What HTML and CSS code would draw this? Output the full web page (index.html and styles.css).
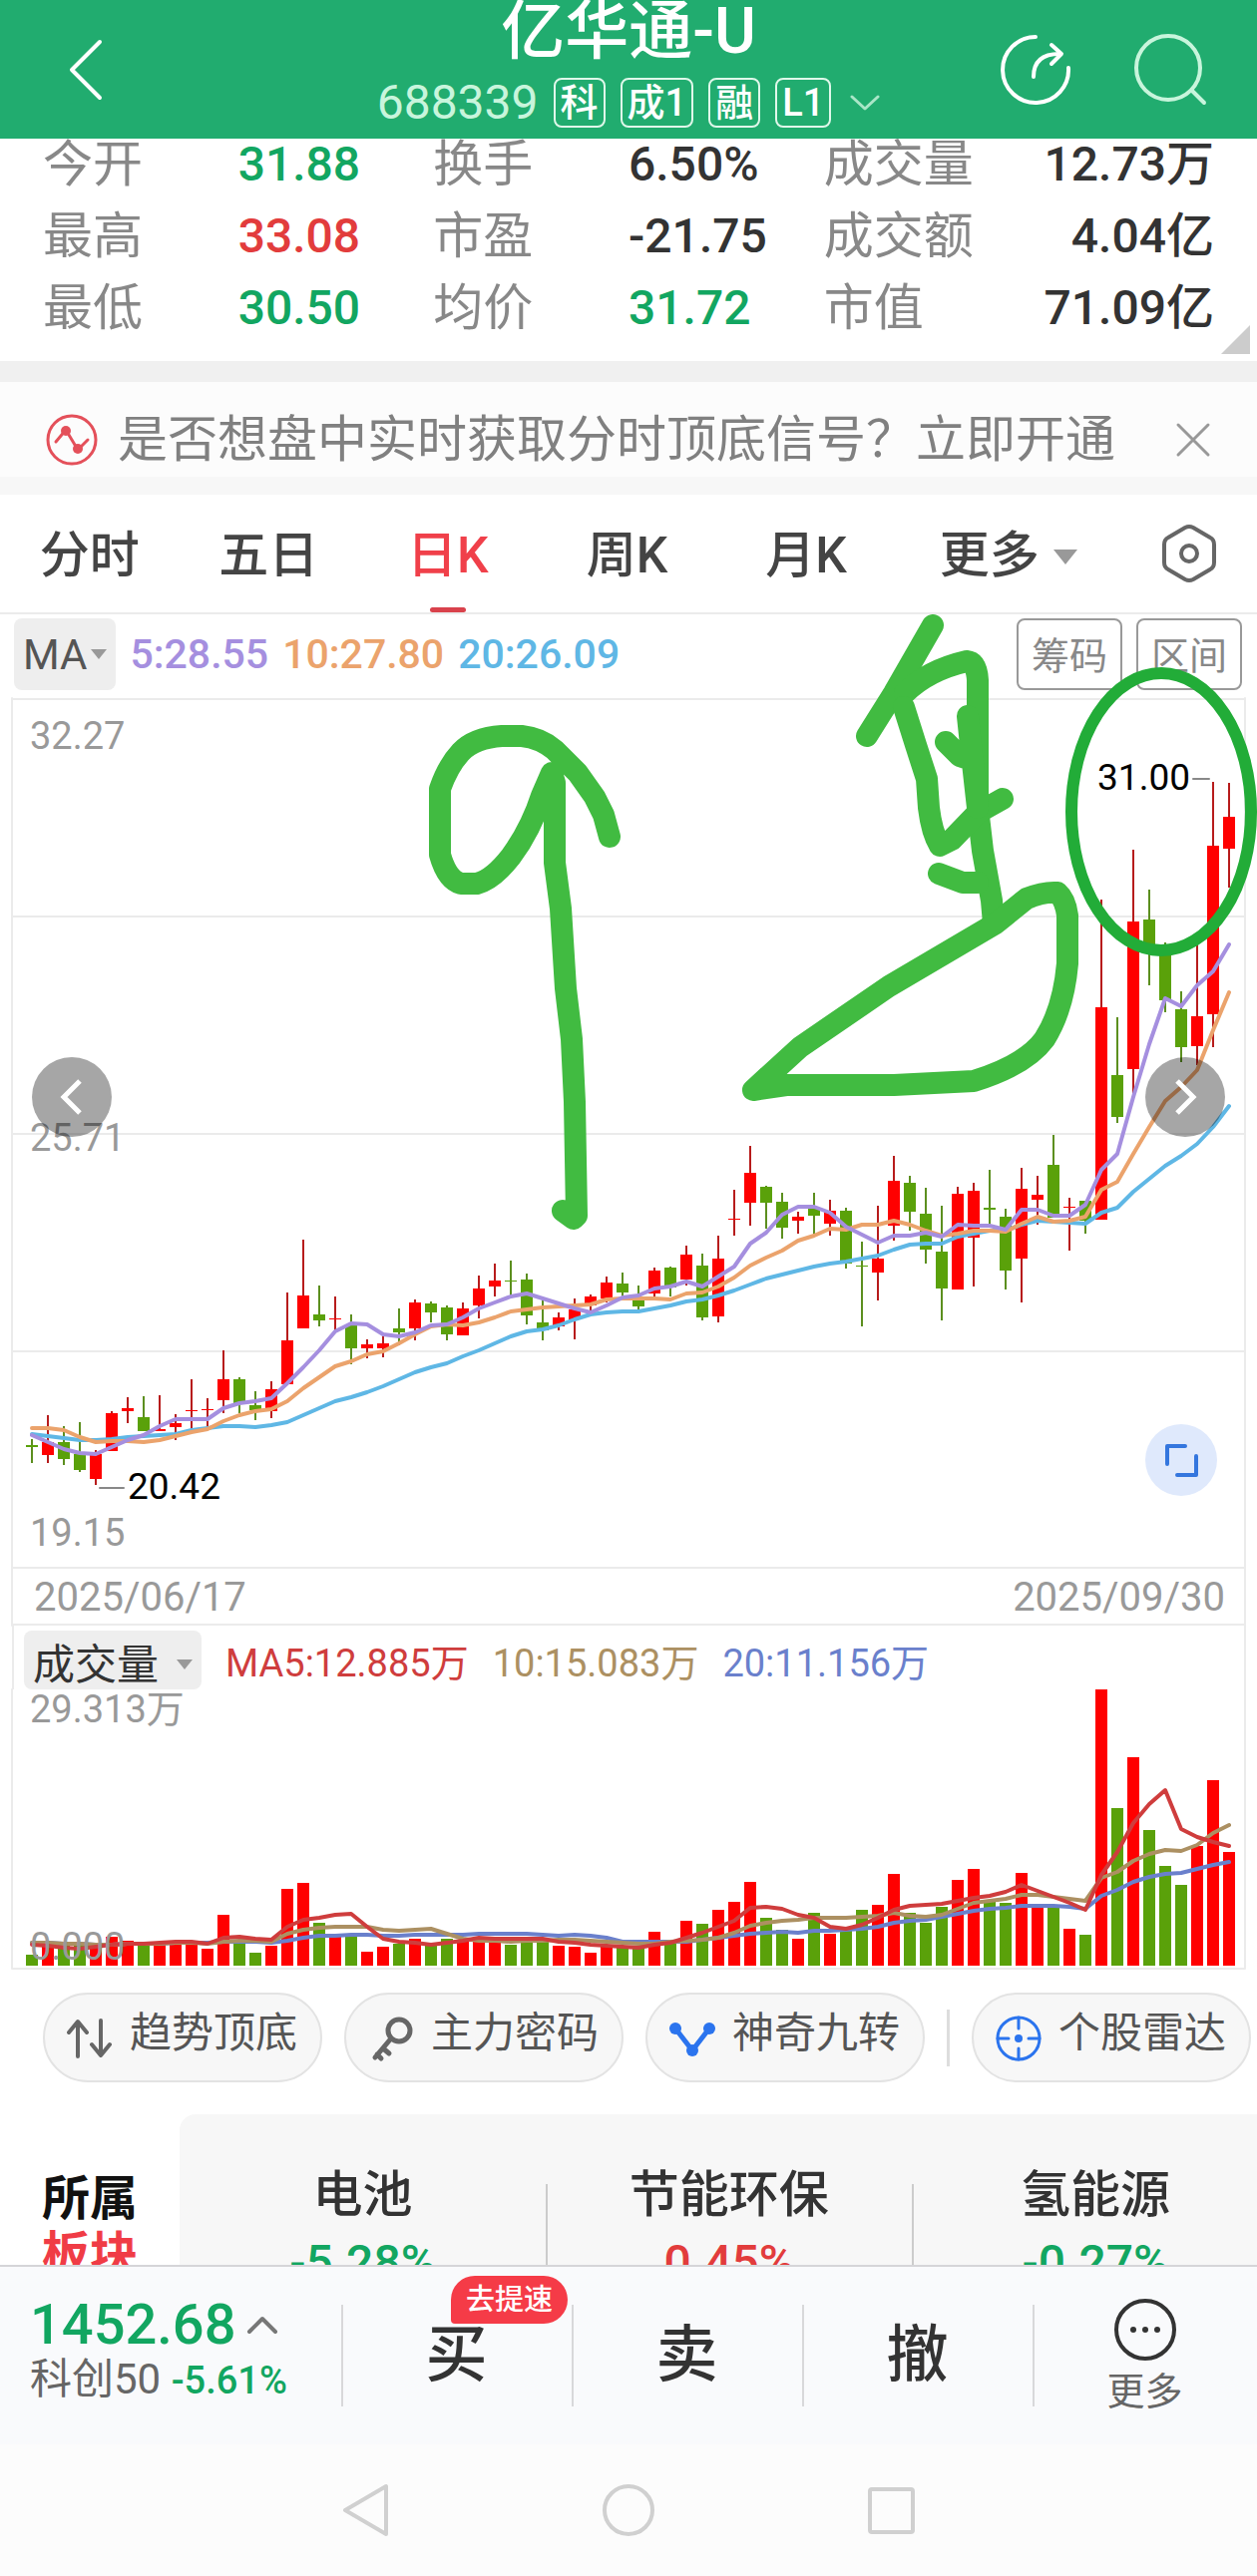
FILE: index.html
```
<!DOCTYPE html>
<html lang="zh-CN">
<head>
    <meta charset="UTF-8">
    <meta name="viewport" content="width=device-width, initial-scale=1.0">
    <title>亿华通-U 688339</title>
    <link rel="stylesheet" href="styles.css">
</head>
<body>
    <header class="header">
        <button type="button" class="iconBtn backBtn" aria-label="返回">
            <svg width="40" height="64" viewBox="0 0 40 64"><path d="M34 4L6 32L34 60"/></svg>
        </button>
        <div class="headerMain">
            <h1 class="stockName">亿华通-U</h1>
            <div class="stockInfo">
                <span class="stockCode">688339</span>
                <span class="badge">科</span>
                <span class="badge">成1</span>
                <span class="badge">融</span>
                <span class="badge">L1</span>
                <svg class="infoArrow" width="30" height="16" viewBox="0 0 30 16"><path d="M2 2L15 14L28 2"/></svg>
            </div>
        </div>
        <div class="headerTools">
            <button type="button" class="iconBtn" aria-label="分享">
                <svg width="76" height="76" viewBox="0 0 76 76"><path d="M38 5A33 33 0 1 0 71 36"/><path d="M36 45C36 30 44 22 62 22"/><path d="M54 13L64 22L54 32"/></svg>
            </button>
            <button type="button" class="iconBtn searchBtn" aria-label="搜索">
                <svg width="76" height="76" viewBox="0 0 76 76"><circle cx="36" cy="36" r="32"/><path d="M60 59L72 71"/></svg>
            </button>
        </div>
    </header>

    <section class="quote">
        <span class="label">今开</span><span class="value down">31.88</span>
        <span class="label">换手</span><span class="value">6.50%</span>
        <span class="label">成交量</span><span class="value right">12.73万</span>
        <span class="label">最高</span><span class="value up">33.08</span>
        <span class="label">市盈</span><span class="value">-21.75</span>
        <span class="label">成交额</span><span class="value right">4.04亿</span>
        <span class="label">最低</span><span class="value down">30.50</span>
        <span class="label">均价</span><span class="value down">31.72</span>
        <span class="label">市值</span><span class="value right">71.09亿</span>
    </section>

    <section class="notice">
        <svg width="52" height="52" viewBox="0 0 52 52"><circle class="noticeRing" cx="26" cy="26" r="24"/><path class="noticeRing" d="M10 28L20 16L32 36L42 26"/><circle class="noticeDot" cx="20" cy="17" r="5"/><circle class="noticeDot" cx="32" cy="35" r="5"/></svg>
        <a href="#" class="noticeText">是否想盘中实时获取分时顶底信号？立即开通</a>
        <button type="button" class="iconBtn closeBtn" aria-label="关闭">
            <svg width="36" height="36" viewBox="0 0 36 36"><path d="M3 3L33 33M33 3L3 33"/></svg>
        </button>
    </section>

    <nav class="tabs">
        <button type="button" class="tab">分时</button>
        <button type="button" class="tab">五日</button>
        <button type="button" class="tab active">日K</button>
        <button type="button" class="tab">周K</button>
        <button type="button" class="tab">月K</button>
        <button type="button" class="tab tabMore">更多<i class="triangle"></i></button>
        <button type="button" class="tab tabSet" aria-label="设置">
            <svg width="56" height="60" viewBox="0 0 56 60"><path d="M24 4Q28 2 32 4L49 14Q53 16 53 21V39Q53 44 49 46L32 56Q28 58 24 56L7 46Q3 44 3 39V21Q3 16 7 14Z"/><circle cx="28" cy="30" r="8"/></svg>
        </button>
    </nav>

    <section class="kline">
        <div class="maRow">
            <button type="button" class="pick">MA<i class="triangle small"></i></button>
            <span class="ma5">5:28.55</span>
            <span class="ma10">10:27.80</span>
            <span class="ma20">20:26.09</span>
            <button type="button" class="outline first">筹码</button>
            <button type="button" class="outline">区间</button>
        </div>
        <div class="chartBox">
            <svg class="chart" id="klineChart" viewBox="0 700 1260 930">
                <path class="grid" d="M12 701H1248M12 919H1248M12 1137H1248M12 1355H1248M12 1572H1248M12 1629H1248M12 700V1630M1248 700V1630"/>
                <g class="axis">
                    <text x="30" y="751">32.27</text>
                    <text x="30" y="1154">25.71</text>
                    <text x="30" y="1550">19.15</text>
                    <text class="date" x="34" y="1615">2025/06/17</text>
                    <text class="date" x="1228" y="1615" text-anchor="end">2025/09/30</text>
                </g>
                <g id="candles"></g>
                <g id="klineLines"></g>
                <path class="tick" d="M100 1492H124M1196 781H1212"/>
                <g class="mark">
                    <text x="128" y="1503">20.42</text>
                    <text x="1193" y="792" text-anchor="end">31.00</text>
                </g>
            </svg>
            <button type="button" class="round prev" aria-label="向左">
                <svg width="80" height="80" viewBox="0 0 80 80"><path d="M48 24L32 40L48 56"/></svg>
            </button>
            <button type="button" class="round next" aria-label="向右">
                <svg width="80" height="80" viewBox="0 0 80 80"><path d="M32 24L48 40L32 56"/></svg>
            </button>
            <button type="button" class="full" aria-label="全屏">
                <svg width="72" height="72" viewBox="0 0 72 72"><path d="M22 40V22H40M51 32V51H32"/></svg>
            </button>
        </div>
        <!-- 手绘标注 -->
        <svg class="drawing" viewBox="0 616 1260 956">
            <g class="brush">
                <path d="M611 839L605 817L596 799L579 775L556 752Q542 740 523 738H503Q475 740 462 754Q449 768 441 791V857Q448 882 462 886H478Q494 882 512 859Q532 832 543 798L553 775L556 785V865L562 911L567 991L573 1042L576 1105L578 1219L575 1222L564 1214"/>
                <path d="M935 627L896 695L869 738"/>
                <path d="M907 695Q930 672 969 663Q979 664 980 682V810L985 853L994 903L996 926"/>
                <path d="M906 709L918 747L929 781L931 810Q934 835 942 848L954 842L980 815L1005 801"/>
                <path d="M970 718L974 756L980 810M948 744L962 758L974 762M941 876L965 885H980"/>
                <path d="M755 1093L802 1050L891 989L998 926L1029 901Q1046 894 1060 895Q1068 902 1070 918V966Q1066 1012 1047 1042Q1028 1068 976 1084L896 1088H788Z"/>
            </g>
            <ellipse class="ring" cx="1164" cy="814" rx="90" ry="139"/>
        </svg>
    </section>

    <section class="volume">
        <div class="volRow">
            <button type="button" class="pick volPick">成交量<i class="triangle small"></i></button>
            <span class="vol5">MA5:12.885万</span>
            <span class="vol10">10:15.083万</span>
            <span class="vol20">20:11.156万</span>
        </div>
        <svg class="chart" viewBox="0 1694 1260 282">
            <path class="grid" d="M12 1694V1974H1248V1630"/>
            <g id="volBars"></g>
            <g id="volLines"></g>
            <g class="axis">
                <text x="30" y="1727">29.313万</text>
                <text x="30" y="1965">0.000</text>
            </g>
        </svg>
    </section>

    <section class="tools">
        <button type="button" class="tool">
            <svg width="48" height="48" viewBox="0 0 48 48"><path d="M12 42V8M3 18L12 7L21 18M35 6V40M26 30L35 41L44 30"/></svg>趋势顶底
        </button>
        <button type="button" class="tool">
            <svg width="48" height="48" viewBox="0 0 48 48"><path class="thick" d="M24 24L8 43M16 34L22 39M10 40L14 44"/><circle class="thick" cx="32" cy="16" r="11"/></svg>主力密码
        </button>
        <button type="button" class="tool blue">
            <svg width="48" height="48" viewBox="0 0 48 48"><path class="thick" d="M7 14L24 36L41 14"/><circle class="fill" cx="7" cy="14" r="6"/><circle class="fill" cx="24" cy="36" r="6"/><circle class="fill" cx="41" cy="14" r="6"/></svg>神奇九转
        </button>
        <i class="split"></i>
        <button type="button" class="tool blue">
            <svg width="48" height="48" viewBox="0 0 48 48"><circle cx="24" cy="24" r="21"/><circle class="fill" cx="24" cy="24" r="4"/><path d="M24 3V14M24 34V45M3 24H14M34 24H45"/></svg>个股雷达
        </button>
    </section>

    <section class="plates">
        <h2 class="plateTitle">所属<em>板块</em></h2>
        <div class="plateList">
            <a href="#" class="plate">电池<b class="down">-5.28%</b></a>
            <a href="#" class="plate">节能环保<b class="up">0.45%</b></a>
            <a href="#" class="plate">氢能源<b class="down">-0.27%</b></a>
        </div>
    </section>

    <footer class="trade">
        <div class="index">
            <div class="indexPrice">1452.68<svg width="32" height="20" viewBox="0 0 32 20"><path d="M3 17L16 4L29 17"/></svg></div>
            <div class="indexName">科创50 <b>-5.61%</b></div>
        </div>
        <button type="button" class="tradeBtn">买<span class="tag">去提速</span></button>
        <button type="button" class="tradeBtn">卖</button>
        <button type="button" class="tradeBtn">撤</button>
        <button type="button" class="tradeBtn moreBtn">
            <svg width="64" height="64" viewBox="0 0 64 64"><circle cx="32" cy="32" r="29"/><circle class="dot" cx="20" cy="32" r="3"/><circle class="dot" cx="32" cy="32" r="3"/><circle class="dot" cx="44" cy="32" r="3"/></svg>
            更多
        </button>
    </footer>

    <nav class="sysNav">
        <button type="button" class="iconBtn" aria-label="后退"><svg width="56" height="56" viewBox="0 0 56 56"><path d="M48 4V52L7 28Z"/></svg></button>
        <button type="button" class="iconBtn" aria-label="主页"><svg width="56" height="56" viewBox="0 0 56 56"><circle cx="28" cy="28" r="24"/></svg></button>
        <button type="button" class="iconBtn" aria-label="任务"><svg width="56" height="56" viewBox="0 0 56 56"><rect x="7" y="7" width="43" height="43" rx="2"/></svg></button>
    </nav>

    <script src="chart.js"></script>
</body>
</html>
```
FILE: styles.css
```
*{
    margin: 0;
    padding: 0;
    box-sizing: border-box;
}
body{
    background-color: #fff;
    color: #333;
    font-family: Roboto, "Noto Sans CJK SC", sans-serif;
    overflow-x: hidden;
}
button{
    border: none;
    background: none;
    font-family: inherit;
    color: inherit;
}
a{
    color: inherit;
    text-decoration: none;
}
svg{
    display: block;
    fill: none;
    stroke-linecap: round;
    stroke-linejoin: round;
}
.up{
    color: #e23c3c;
}
.down{
    color: #12a661;
}
.triangle{
    display: inline-block;
    border: 12px solid transparent;
    border-top: 15px solid #999;
    border-bottom: 0;
}
.triangle.small{
    border-width: 10px 8px 0;
}

/* 顶部 */
.header{
    display: grid;
    grid-template-columns: 1fr auto 1fr;
    height: 139px;
    background-color: #21ac6f;
    color: #fff;
}
.header svg{
    stroke: #fff;
    stroke-width: 4;
}
.backBtn{
    justify-self: start;
    align-self: center;
    padding-left: 66px;
}
.stockName{
    padding-top: 2px;
    font-size: 64px;
    font-weight: 500;
    line-height: 60px;
    text-align: center;
}
.stockInfo{
    display: flex;
    align-items: center;
    gap: 15px;
    margin-top: 16px;
}
.stockCode{
    font-size: 48px;
    line-height: 50px;
    color: #c8f5dc;
}
.badge{
    padding: 0 5px;
    border: 2px solid #dff8ea;
    border-radius: 8px;
    font-size: 38px;
    font-weight: 500;
    line-height: 46px;
}
.header .infoArrow{
    margin-left: 4px;
    stroke: #a9e6c7;
    stroke-width: 3;
}
.headerTools{
    display: flex;
    justify-content: flex-end;
    align-items: center;
    gap: 59px;
    padding-right: 49px;
}
.header .searchBtn svg{
    stroke: #c8f5dc;
}

/* 行情 */
.quote{
    position: relative;
    display: grid;
    grid-template-columns: repeat(6, 1fr);
    margin-top: -10px;
    padding: 0 43px 17px;
    line-height: 72px;
    white-space: nowrap;
}
.quote::after{
    content: "";
    position: absolute;
    right: 7px;
    bottom: 7px;
    border-left: 29px solid transparent;
    border-bottom: 29px solid #ccc;
}
.label{
    font-size: 50px;
    color: #888;
}
.value{
    font-size: 48px;
    font-weight: 500;
}
.value.right{
    text-align: right;
}

/* 提示条 */
.notice{
    display: flex;
    align-items: center;
    height: 134px;
    padding: 20px 46px 0;
    border-top: 21px solid #f0f0f0;
    border-bottom: 18px solid #f7f7f7;
    background-color: #fcfcfc;
}
.noticeRing{
    stroke: #e4505a;
    stroke-width: 3;
}
.noticeDot{
    fill: #e4505a;
}
.noticeText{
    flex: 1;
    margin-left: 20px;
    font-size: 50px;
    line-height: 60px;
    color: #808080;
    white-space: nowrap;
}
.closeBtn svg{
    stroke: #999;
    stroke-width: 3;
}

/* 周期 */
.tabs{
    display: flex;
    height: 120px;
    border-bottom: 2px solid #ebebeb;
}
.tab{
    position: relative;
    flex: 179 0 0;
    padding-bottom: 6px;
    font-size: 50px;
    font-weight: 500;
    color: #444;
}
.tab.active{
    color: #f0404a;
}
.tab.active::after{
    content: "";
    position: absolute;
    left: 50%;
    bottom: 0;
    width: 36px;
    height: 5px;
    margin-left: -18px;
    border-radius: 3px;
    background-color: #d9424c;
}
.tabMore{
    flex-grow: 225;
}
.tabMore .triangle{
    margin-left: 14px;
    vertical-align: 8px;
}
.tabSet{
    flex-grow: 136;
    padding-bottom: 0;
}
.tabSet svg{
    margin: 0 auto;
    stroke: #666;
    stroke-width: 4;
}

/* K线 */
.kline{
    position: relative;
}
.maRow{
    display: flex;
    align-items: center;
    gap: 14px;
    height: 84px;
    padding: 0 15px 4px 14px;
    font-size: 41px;
}
.pick{
    height: 72px;
    padding: 0 9px;
    border-radius: 8px;
    background-color: #eee;
    font-size: 42px;
    color: #555;
    white-space: nowrap;
}
.pick .triangle{
    margin-left: 4px;
    vertical-align: 10px;
}
.ma5{
    color: #a58fdf;
}
.ma10{
    color: #eba36c;
}
.ma20{
    color: #5fb7e5;
}
.ma5, .ma10, .ma20{
    font-weight: 500;
}
.outline{
    height: 72px;
    padding: 0 13px 3px;
    border: 2px solid #999;
    border-radius: 8px;
    font-size: 38px;
    color: #888;
}
.outline.first{
    margin-left: auto;
}
.chartBox{
    position: relative;
}
.chart{
    width: 100%;
    overflow: visible;
}
.grid{
    stroke: #ebebeb;
    stroke-width: 2;
}
.axis{
    fill: #999;
    font-size: 38px;
}
.axis .date{
    font-size: 40px;
}
.mark{
    fill: #000;
    font-size: 37px;
}
.tick{
    stroke: #888;
    stroke-width: 2;
}
.red{
    fill: #f00;
    stroke: #b71c1c;
}
.green{
    fill: #5aa10a;
    stroke: #5c8f1f;
}
.body{
    stroke: none;
}
.line{
    stroke-width: 4;
}
.round{
    position: absolute;
    top: 360px;
    border-radius: 50%;
    background-color: rgba(0, 0, 0, 0.35);
}
.round svg{
    stroke: #fff;
    stroke-width: 5;
    stroke-linecap: butt;
    stroke-linejoin: miter;
}
.prev{
    left: 32px;
}
.next{
    right: 32px;
}
.full{
    position: absolute;
    right: 40px;
    top: 728px;
    border-radius: 50%;
    background-color: #dfe9fc;
}
.full svg{
    stroke: #3476de;
    stroke-width: 4;
}
.drawing{
    position: absolute;
    left: 0;
    top: 0;
    width: 100%;
    pointer-events: none;
}
.brush{
    stroke: #41bb41;
    stroke-width: 22;
}
.ring{
    stroke: #22ac38;
    stroke-width: 12;
}

/* 成交量 */
.volRow{
    display: flex;
    align-items: center;
    gap: 24px;
    height: 64px;
    margin: 0 12px;
    padding: 5px 12px 0 10px;
    border-left: 2px solid #ebebeb;
    font-size: 38px;
}
.volPick{
    height: 59px;
    padding-bottom: 3px;
    color: #333;
}
.volPick .triangle{
    margin-left: 18px;
}
.vol5{
    color: #cf3d3d;
}
.vol10{
    color: #ac9062;
}
.vol20{
    color: #6a80cc;
}

/* 工具 */
.tools{
    display: flex;
    align-items: center;
    gap: 22px;
    padding: 22px 0 32px 43px;
}
.tool{
    display: flex;
    flex: none;
    align-items: center;
    gap: 16px;
    width: 280px;
    height: 90px;
    padding: 0 0 8px 21px;
    border: 2px solid #e3e3e3;
    border-radius: 45px;
    background-color: #f7f7f7;
    font-size: 42px;
    line-height: 50px;
    color: #555;
    white-space: nowrap;
}
.tool svg{
    flex: none;
    margin-top: 10px;
    stroke: #666;
    stroke-width: 4;
}
.tool.blue svg{
    stroke: #2b74ee;
    stroke-width: 3;
}
.tool .fill{
    fill: #2b74ee;
    stroke: none;
}
.tool .thick{
    stroke-width: 5;
}
.split{
    width: 3px;
    height: 57px;
    background-color: #ddd;
}

/* 板块 */
.plates{
    display: flex;
    height: 151px;
    overflow: hidden;
}
.plateTitle{
    flex: none;
    width: 180px;
    padding-top: 57px;
    font-size: 48px;
    line-height: 56px;
    text-align: center;
    color: #111;
}
.plateTitle em{
    display: block;
    font-style: normal;
    color: #f03c46;
}
.plateList{
    display: flex;
    flex: 1;
    overflow: hidden;
    border-radius: 16px 0 0 0;
    background-color: #f7f7f7;
}
.plate{
    position: relative;
    flex: none;
    width: 34%;
    padding-top: 45px;
    font-size: 50px;
    font-weight: 500;
    line-height: 72px;
    text-align: center;
}
.plate + .plate::before{
    content: "";
    position: absolute;
    left: 0;
    top: 70px;
    bottom: 0;
    border-left: 2px solid #ccc;
}
.plate b{
    display: block;
    font-size: 48px;
    font-weight: 500;
    line-height: 64px;
}

/* 底部交易栏 */
.trade{
    display: grid;
    grid-template-columns: 342fr 231fr 231fr 231fr 225fr;
    height: 180px;
    border-top: 2px solid #d5d5d8;
    background-color: #f9fafc;
}
.index{
    padding: 25px 0 0 30px;
    white-space: nowrap;
}
.indexPrice{
    display: flex;
    align-items: center;
    gap: 10px;
    font-size: 56px;
    font-weight: 500;
    line-height: 66px;
    color: #12a661;
}
.indexPrice svg{
    stroke: #777;
    stroke-width: 4;
}
.indexName{
    font-size: 42px;
    line-height: 44px;
    color: #666;
}
.indexName b{
    font-size: 38px;
    font-weight: 500;
    color: #12a661;
}
.tradeBtn{
    position: relative;
    font-size: 62px;
    font-weight: 500;
    line-height: 80px;
}
.tradeBtn::before{
    content: "";
    position: absolute;
    left: 0;
    top: 38px;
    height: 102px;
    border-left: 2px solid #d8d8da;
}
.tag{
    position: absolute;
    left: 110px;
    top: 9px;
    padding: 0 15px;
    border-radius: 24px 24px 24px 4px;
    background-color: #f53b47;
    font-size: 29px;
    line-height: 48px;
    color: #fff;
    white-space: nowrap;
}
.moreBtn{
    padding-top: 8px;
    font-size: 38px;
    font-weight: 400;
    line-height: 60px;
    color: #666;
}
.moreBtn svg{
    margin: 0 auto;
    stroke: #333;
    stroke-width: 4;
}
.moreBtn .dot{
    fill: #333;
    stroke: none;
}
.sysNav{
    display: grid;
    grid-template-columns: repeat(3, 263px);
    justify-content: center;
    height: 132px;
    background-color: #fcfcfc;
}
.sysNav svg{
    margin: 0 auto;
    stroke: #d0d0d0;
    stroke-width: 4;
}
```
FILE: chart.js
```
// 每根K线: 颜色, 最高, 实体上沿, 实体下沿, 最低, 成交量柱高
var days = [
    ["g",1443,1449,1451,1467,11], ["r",1419,1446,1459,1467,22], ["g",1430,1446,1463,1469,22], ["g",1426,1458,1474,1476,20],
    ["r",1454,1458,1483,1489,18], ["r",1415,1417,1455,1455,29], ["r",1401,1412,1415,1427,25], ["g",1400,1421,1435,1435,22],
    ["r",1399,1433,1435,1435,22], ["r",1418,1427,1431,1444,22], ["r",1383,1414,1415,1433,22], ["r",1402,1413,1414,1432,17],
    ["r",1354,1383,1404,1417,51], ["g",1381,1383,1408,1417,25], ["g",1395,1409,1414,1424,13], ["r",1385,1393,1415,1422,20],
    ["r",1296,1344,1388,1388,77], ["r",1243,1299,1332,1332,83], ["g",1289,1318,1324,1330,43], ["r",1300,1322,1323,1335,29],
    ["g",1318,1328,1352,1368,29], ["r",1343,1348,1352,1362,14], ["r",1339,1347,1352,1361,19], ["g",1312,1332,1336,1349,22],
    ["r",1303,1306,1332,1344,27], ["g",1305,1307,1316,1326,21], ["g",1309,1311,1338,1344,27], ["r",1306,1312,1339,1339,26],
    ["r",1279,1292,1309,1322,29], ["r",1267,1284,1290,1300,28], ["g",1264,1284,1285,1299,21], ["g",1277,1283,1319,1328,25],
    ["g",1304,1326,1334,1344,24], ["r",1316,1321,1330,1334,20], ["r",1302,1313,1323,1343,19], ["r",1298,1300,1309,1315,13],
    ["r",1280,1286,1302,1306,19], ["g",1276,1287,1296,1300,18], ["g",1289,1301,1310,1314,18], ["r",1271,1274,1297,1304,34],
    ["g",1270,1271,1291,1300,22], ["r",1249,1258,1283,1289,45], ["g",1257,1269,1321,1324,42], ["r",1239,1262,1320,1326,56],
    ["r",1193,1222,1223,1239,64], ["r",1149,1176,1206,1229,84], ["g",1189,1190,1206,1232,48], ["g",1196,1205,1231,1242,36],
    ["r",1215,1220,1224,1237,27], ["g",1196,1212,1219,1238,53], ["r",1203,1214,1227,1239,32], ["g",1211,1214,1267,1272,37],
    ["g",1245,1269,1270,1330,56], ["r",1209,1262,1276,1304,61], ["r",1159,1184,1229,1244,92], ["g",1179,1186,1215,1234,53],
    ["g",1191,1217,1253,1267,43], ["g",1209,1255,1292,1324,59], ["r",1190,1197,1293,1293,86], ["r",1186,1194,1241,1290,97],
    ["g",1173,1211,1213,1228,65], ["g",1212,1220,1274,1293,63], ["r",1171,1192,1262,1306,93], ["r",1179,1198,1203,1228,59],
    ["g",1138,1168,1221,1221,60], ["r",1201,1210,1211,1254,37], ["g",1204,1204,1224,1237,31], ["r",902,1010,1223,1223,277],
    ["g",1020,1078,1120,1126,158], ["r",852,924,1072,1103,209], ["g",892,922,948,988,136], ["g",945,950,1003,1015,100],
    ["g",994,1012,1050,1065,81], ["r",944,1019,1049,1068,120], ["r",784,848,1017,1050,186], ["r",785,819,851,890,114]
];

var klineLines = [
    ["#5fb7e5", [1438,1440,1442,1444,1444,1443,1441,1440,1439,1438,1434,1432,1430,1430,1431,1429,1426,1419,1412,1405,1401,1396,1390,1383,1376,1371,1367,1360,1354,1347,1340,1335,1333,1329,1323,1318,1316,1315,1315,1312,1309,1305,1303,1299,1294,1288,1282,1278,1274,1270,1267,1265,1262,1259,1253,1248,1247,1247,1240,1237,1234,1234,1228,1224,1225,1226,1227,1216,1211,1195,1182,1169,1159,1147,1130,1109]],
    ["#eba36c", [1432,1432,1434,1441,1446,1445,1445,1446,1444,1440,1436,1433,1425,1419,1415,1413,1405,1392,1381,1370,1365,1358,1355,1347,1338,1330,1328,1329,1326,1321,1315,1313,1311,1310,1309,1308,1303,1302,1302,1302,1303,1297,1296,1290,1281,1269,1261,1254,1244,1239,1232,1233,1228,1228,1224,1228,1234,1239,1237,1234,1234,1235,1227,1220,1225,1224,1220,1193,1185,1157,1130,1104,1090,1073,1033,995]],
    ["#a58fdf", [1439,1446,1453,1457,1458,1451,1444,1439,1430,1423,1423,1423,1412,1407,1405,1402,1387,1371,1354,1335,1327,1328,1338,1340,1336,1329,1328,1321,1312,1306,1300,1297,1302,1307,1312,1316,1309,1301,1299,1292,1290,1285,1290,1280,1270,1247,1236,1218,1210,1210,1216,1230,1238,1246,1239,1239,1236,1240,1228,1229,1229,1233,1213,1213,1219,1219,1208,1173,1157,1100,1047,1001,1009,988,974,947]]
];

var volLines = [
    ["#6a80cc", [1948,1948,1949,1949,1950,1950,1949,1949,1949,1948,1948,1948,1947,1947,1947,1948,1946,1943,1941,1941,1940,1940,1941,1941,1940,1940,1940,1940,1939,1939,1939,1939,1940,1941,1940,1941,1943,1947,1947,1947,1947,1947,1945,1943,1941,1939,1938,1937,1938,1936,1936,1935,1934,1932,1928,1926,1925,1922,1919,1916,1914,1913,1911,1911,1911,1912,1914,1901,1895,1887,1882,1879,1878,1874,1870,1867]],
    ["#ac9062", [1948,1948,1949,1949,1950,1950,1949,1949,1949,1948,1948,1949,1947,1946,1946,1947,1939,1935,1933,1932,1932,1932,1935,1936,1935,1934,1939,1944,1946,1946,1947,1946,1946,1945,1945,1946,1947,1948,1949,1949,1947,1946,1945,1943,1938,1931,1928,1926,1925,1923,1923,1923,1922,1921,1918,1921,1922,1920,1914,1908,1906,1904,1900,1900,1902,1904,1906,1883,1877,1866,1859,1855,1856,1850,1838,1830]],
    ["#cf3d3d", [1950,1951,1953,1954,1952,1950,1949,1949,1948,1947,1947,1949,1943,1942,1944,1945,1932,1925,1923,1920,1919,1932,1944,1947,1948,1950,1948,1946,1943,1944,1944,1944,1944,1947,1948,1950,1951,1952,1953,1950,1948,1943,1938,1932,1926,1913,1912,1914,1920,1923,1932,1934,1930,1923,1915,1911,1910,1909,1906,1903,1901,1897,1890,1896,1902,1908,1915,1880,1857,1828,1809,1795,1834,1842,1847,1851]]
];

var first = 32, step = 16, base = 1971;

function add(parentId, name, attrs){
    var node = document.createElementNS("http://www.w3.org/2000/svg", name);
    for(var key in attrs){
        node.setAttribute(key, attrs[key]);
    }
    document.getElementById(parentId).appendChild(node);
}

function drawLines(parentId, lines){
    for(var i=0; i<lines.length; i++){
        var points = lines[i][1].map(function(y, n){
            return (first + n * step) + "," + y;
        });
        add(parentId, "polyline", {"class": "line", points: points.join(" "), stroke: lines[i][0]});
    }
}

for(var i=0, len=days.length; i<len; i++){
    var d = days[i];
    var x = first + i * step;
    var color = d[0] == "r" ? "red" : "green";
    add("candles", "path", {"class": color, d: "M" + x + " " + d[1] + "V" + d[4], "stroke-width": 2, "stroke-linecap": "butt"});
    add("candles", "rect", {"class": color + " body", x: x - 6, y: d[2], width: 12, height: d[3] - d[2]});
    add("volBars", "rect", {"class": color + " body", x: x - 6, y: base - d[5], width: 12, height: d[5]});
}
drawLines("klineLines", klineLines);
drawLines("volLines", volLines);
```
